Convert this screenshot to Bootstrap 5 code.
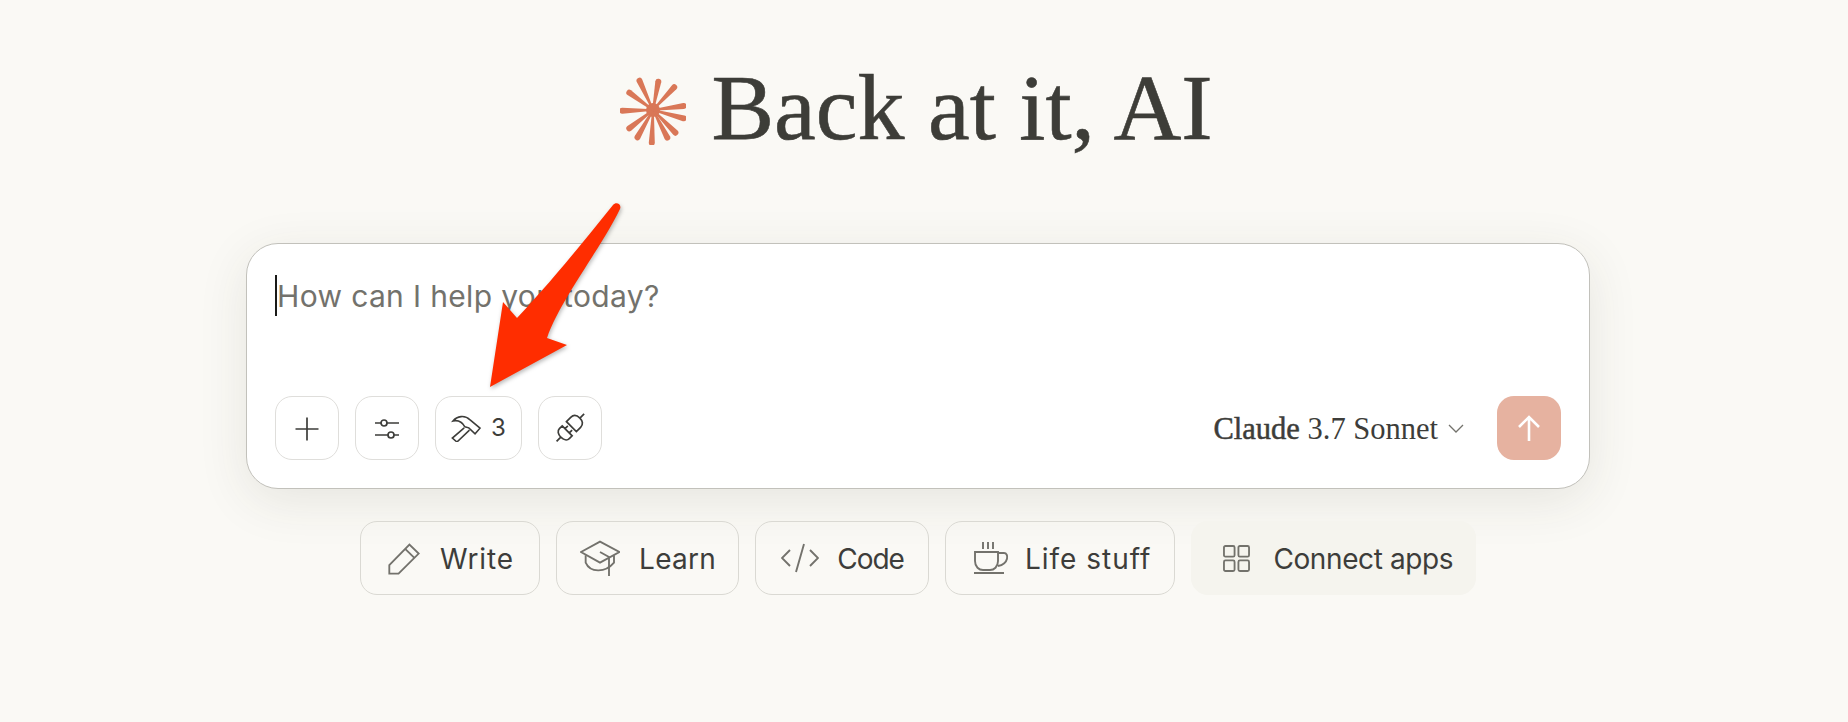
<!DOCTYPE html>
<html lang="en">
<head>
<meta charset="utf-8">
<meta name="viewport" content="width=device-width, initial-scale=1.0">
<title>Claude</title>
<link href="https://cdn.jsdelivr.net/npm/bootstrap@5.3.1/dist/css/bootstrap.min.css" rel="stylesheet">
<style>
    body { background: #faf9f5; color: #3d3d3a; font-family: "Inter", "Liberation Sans", sans-serif; overflow: hidden; height: 722px; }
    .page-wrap { padding: 53px 12px 0 0; }
    .greeting { height: 108px; gap: 27px; margin-bottom: 82px; margin-right: 5px; }
    .greeting h1 { font-family: "Liberation Serif", serif; font-size: 94px; line-height: 108px; font-weight: 400; margin: 0; color: #3d3d38; -webkit-text-stroke: .6px #3d3d38; }
    .star-logo { width: 66px; height: 68px; margin-top: 8px; margin-left: 2px; margin-right: -2px; fill: #d97757; }
    .composer { width: 1344px; height: 246px; background: #fff; border: 1px solid #c2c1bb; border-radius: 32px; padding: 28px; box-shadow: 0 12px 50px rgba(60, 55, 40, .1); margin-bottom: 32px; }
    .prompt-line { height: 124px; }
    .fake-caret { width: 2px; height: 41px; background: #1a1a18; margin-top: 3px; }
    .prompt-text { font-size: 30px; line-height: 46px; letter-spacing: .35px; color: #73726c; margin-top: 1px; }
    .tool-btn { height: 64px; min-width: 64px; padding: 0; border: 1px solid #dfdedb; border-radius: 17px; background: #fff; color: #3d3d3a; font-size: 24px; }
    .tool-wide { width: 87px; gap: 9px; }
    .tool-row { gap: 16px; }
    .model-pick { font-family: "Liberation Serif", serif; font-size: 30.5px; color: #3d3d3a; gap: 10px; margin-right: 33px; }
    .model-name { margin-top: 3px; }
    .model-pick b { font-weight: 400; -webkit-text-stroke: .5px #3d3d3a; }
    .send-btn { width: 64px; height: 64px; padding: 0; border: 0; border-radius: 17px; background: #e6b2a0; }
    .send-btn:disabled { background: #e6b2a0; opacity: 1; }
    .chip-row { gap: 16px; }
    .chip-btn { height: 74px; padding: 0 24px; border: 1px solid #dad9d3; border-radius: 17px; background: transparent; color: #3d3d3a; font-size: 28px; gap: 19px; }
    .chip-btn span { padding-top: 2px; }
    .chip-write { padding-left: 26px; padding-right: 25px; letter-spacing: .9px; gap: 20px; }
    .chip-learn { padding-left: 23px; padding-right: 22px; letter-spacing: .3px; }
    .chip-code { padding-left: 25px; padding-right: 24px; letter-spacing: -1px; gap: 18px; }
    .chip-life { padding-left: 28px; padding-right: 23px; letter-spacing: 1px; gap: 15px; }
    .chip-apps { padding-left: 31px; padding-right: 22px; letter-spacing: -.4px; gap: 23px; border-color: #f5f4ee; background: #f5f4ee; }
    .ico { fill: none; stroke: #3d3d3a; stroke-width: 1.7; }
    .ico-grey { stroke: #73726c; stroke-width: 1.9; }
    .red-arrow { position: absolute; left: 0; top: 0; width: 1848px; height: 722px; pointer-events: none; filter: drop-shadow(1px 2px 2px rgba(0, 0, 0, .28)); }
</style>
</head>
<body>
<div class="page-wrap d-flex flex-column align-items-center">
    <div class="greeting d-flex align-items-center">
        <svg class="star-logo" id="star-logo" viewBox="-33 -33 66 68"></svg>
        <h1>Back at it, AI</h1>
    </div>

    <div class="composer">
        <div class="prompt-line d-flex align-items-start">
            <span class="fake-caret"></span>
            <span class="prompt-text">How can I help you today?</span>
        </div>
        <div class="d-flex align-items-center justify-content-between">
            <div class="tool-row d-flex">
                <button class="btn tool-btn" type="button">
                    <svg class="ico" width="24" height="24" viewBox="0 0 24 24"><path d="M0.5 12H23.5M12 0.5V23.5"/></svg>
                </button>
                <button class="btn tool-btn" type="button">
                    <svg class="ico" width="24" height="24" viewBox="0 0 24 24"><path d="M0 6H6M12 6H24M0 18H13M19 18H24"/><circle cx="9" cy="6" r="3"/><circle cx="16" cy="18" r="3"/></svg>
                </button>
                <button class="btn tool-btn tool-wide d-flex align-items-center justify-content-center" type="button">
                    <svg class="ico" width="31" height="27" viewBox="565 85 92 82" style="stroke-width:4.8"><path d="M570 103C582 88 606 84 622 100L652 125L637 142L618 124L606 121C597 104 585 100 570 103Z"/><path d="M604 124L568 155L582 167L620 131"/></svg>
                    <span>3</span>
                </button>
                <button class="btn tool-btn" type="button">
                    <svg class="ico" width="38" height="38" viewBox="-1 -19 38 38"><g transform="rotate(-45 18 0)"><path d="M-1 0H5M14 -7V7H10C7 7 5 4 5 0C5 -4 7 -7 10 -7ZM14 -3H18M14 3H18M20 -7H26C30 -7 32 -4 32 0C32 4 30 7 26 7H20ZM32 0H38"/></g></svg>
                </button>
            </div>
            <div class="d-flex align-items-center">
                <div class="model-pick d-flex align-items-center">
                    <span class="model-name"><b>Claude</b> 3.7 Sonnet</span>
                    <svg class="ico ico-grey" width="16" height="9" viewBox="0 0 16 9" style="stroke-width:1.3"><path d="M1 1L8 8L15 1"/></svg>
                </div>
                <button class="btn send-btn d-flex align-items-center justify-content-center" type="button" disabled>
                    <svg class="ico" width="24" height="27" viewBox="0 0 24 27" style="stroke:#fff;stroke-width:2.6"><path d="M12 26V2M2 12L12 2L22 12"/></svg>
                </button>
            </div>
        </div>
    </div>

    <div class="chip-row d-flex">
        <button class="btn chip-btn chip-write d-flex align-items-center" type="button">
            <svg class="ico ico-grey" width="33" height="33" viewBox="115 90 100 100" style="stroke-width:5.6"><path d="M122 186V160L183 98L211 125L150 186Z"/><path d="M170 111L198 138"/></svg>
            <span>Write</span>
        </button>
        <button class="btn chip-btn chip-learn d-flex align-items-center" type="button">
            <svg class="ico ico-grey" width="40" height="36" viewBox="695 92 120 108" style="stroke-width:5.6"><path d="M698 128L755 97L813 128L755 160Z"/><path d="M712 138V160C725 190 770 192 797 160V138"/><path d="M755 128L782 143V200"/></svg>
            <span>Learn</span>
        </button>
        <button class="btn chip-btn chip-code d-flex align-items-center" type="button">
            <svg class="ico ico-grey" width="38" height="30" viewBox="0 0 38 30"><path d="M9 7L1 15L9 23M29 7L37 15L29 23M23 1L15 29"/></svg>
            <span>Code</span>
        </button>
        <button class="btn chip-btn chip-life d-flex align-items-center" type="button">
            <svg class="ico ico-grey" width="36" height="32" viewBox="0 0 36 32"><path d="M1 10H24V19C24 25 20 28 16 28H9C5 28 1 25 1 19Z"/><path d="M24 11H30C35 11 35 22 24 24"/><path d="M0 31H30M9 0V7M14 0V7M19 0V7"/></svg>
            <span>Life stuff</span>
        </button>
        <button class="btn chip-btn chip-apps d-flex align-items-center" type="button">
            <svg class="ico ico-grey" width="27" height="27" viewBox="0 0 28 28"><rect x="1" y="1" width="11" height="11" rx="1.5"/><rect x="16" y="1" width="11" height="11" rx="1.5"/><rect x="1" y="16" width="11" height="11" rx="1.5"/><rect x="16" y="16" width="11" height="11" rx="1.5"/></svg>
            <span>Connect apps</span>
        </button>
    </div>
</div>

<svg class="red-arrow" viewBox="0 0 1848 722">
    <path fill="#ff2d00" d="M490 387L503 302L517 318C550 283 585 240 613 205C616 201 622 204 620 209C600 250 560 300 547 338L567 345Z"/>
</svg>
<script src="https://cdn.jsdelivr.net/npm/bootstrap@5.3.1/dist/js/bootstrap.bundle.min.js"></script>
<script>
    // blades of the logo, each one narrow at the middle and wider at its tip
    const tips = [[-13.5,-29.3],[5.3,-28.3],[21.2,-22.7],[30.6,-4],[30.6,8.3],[22.4,22.7],[14.3,27.7],[-1.2,32.7],[-15.5,27.3],[-23.7,18.3],[-30.6,.7],[-23.7,-17.3]];
    let blades = '<circle r="7"/>';
    tips.forEach(function(t) {
        const len = Math.hypot(t[0], t[1]);
        const nx = -t[1] / len, ny = t[0] / len;
        const w = 3;
        blades += `<path d="M${nx*.8} ${ny*.8}L${t[0]+nx*w} ${t[1]+ny*w}A${w} ${w} 0 0 0 ${t[0]-nx*w} ${t[1]-ny*w}L${-nx*.8} ${-ny*.8}Z"/>`;
    });
    document.getElementById('star-logo').innerHTML = blades;
</script>
</body>
</html>
